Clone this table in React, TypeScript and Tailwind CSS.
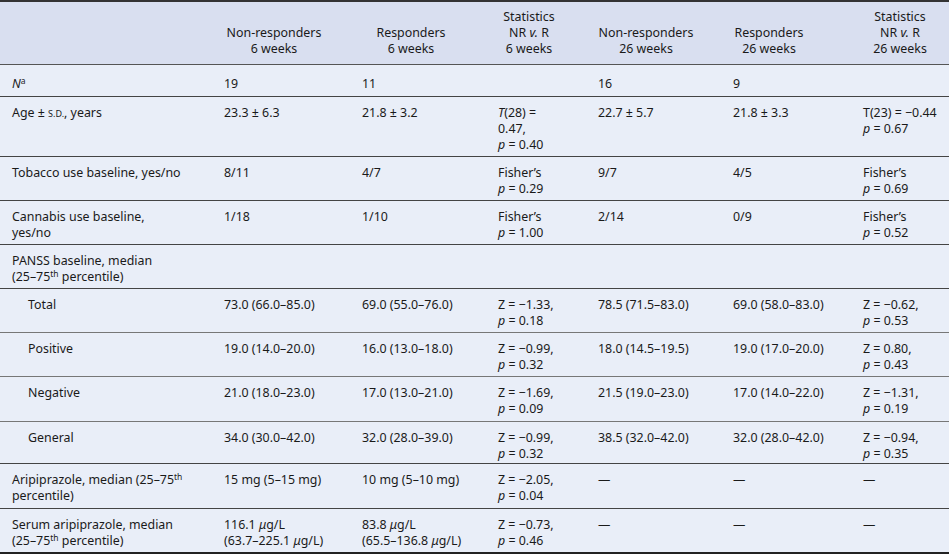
import React from 'react'

const font = { fontFamily: '"Noto Sans", "Open Sans", sans-serif' }

function P({ v }: { v: string }) {
    return (
        <>
            <i>p</i> = {v}
        </>
    )
}

function Th() {
    return <sup className="text-[8.5px] leading-none">th</sup>
}

type Row = {
    label: React.ReactNode
    indent?: boolean
    cells: React.ReactNode[]
    light?: boolean
    h: string
}

const rows: Row[] = [
    {
        label: 'Tobacco use baseline, yes/no',
        h: 'h-[43px]',
        cells: ['8/11', '4/7', <>Fisher’s<br /><P v="0.29" /></>, '9/7', '4/5', <>Fisher’s<br /><P v="0.69" /></>],
    },
    {
        label: <>Cannabis use baseline,<br />yes/no</>,
        h: 'h-[43px]',
        cells: ['1/18', '1/10', <>Fisher’s<br /><P v="1.00" /></>, '2/14', '0/9', <>Fisher’s<br /><P v="0.52" /></>],
    },
    {
        label: <>PANSS baseline, median<br />(25–75<Th /> percentile)</>,
        h: 'h-[43px]',
        cells: ['', '', '', '', '', ''],
    },
    {
        label: 'Total',
        indent: true,
        light: true,
        h: 'h-[43px]',
        cells: ['73.0 (66.0–85.0)', '69.0 (55.0–76.0)', <>Z = −1.33,<br /><P v="0.18" /></>, '78.5 (71.5–83.0)', '69.0 (58.0–83.0)', <>Z = −0.62,<br /><P v="0.53" /></>],
    },
    {
        label: 'Positive',
        indent: true,
        light: true,
        h: 'h-[43px]',
        cells: ['19.0 (14.0–20.0)', '16.0 (13.0–18.0)', <>Z = −0.99,<br /><P v="0.32" /></>, '18.0 (14.5–19.5)', '19.0 (17.0–20.0)', <>Z = 0.80,<br /><P v="0.43" /></>],
    },
    {
        label: 'Negative',
        indent: true,
        light: true,
        h: 'h-[44px]',
        cells: ['21.0 (18.0–23.0)', '17.0 (13.0–21.0)', <>Z = −1.69,<br /><P v="0.09" /></>, '21.5 (19.0–23.0)', '17.0 (14.0–22.0)', <>Z = −1.31,<br /><P v="0.19" /></>],
    },
    {
        label: 'General',
        indent: true,
        h: 'h-[41px]',
        cells: ['34.0 (30.0–42.0)', '32.0 (28.0–39.0)', <>Z = −0.99,<br /><P v="0.32" /></>, '38.5 (32.0–42.0)', '32.0 (28.0–42.0)', <>Z = −0.94,<br /><P v="0.35" /></>],
    },
    {
        label: <>Aripiprazole, median (25–75<Th /><br />percentile)</>,
        h: 'h-[44px]',
        cells: ['15 mg (5–15 mg)', '10 mg (5–10 mg)', <>Z = −2.05,<br /><P v="0.04" /></>, '—', '—', '—'],
    },
    {
        label: <>Serum aripiprazole, median<br />(25–75<Th /> percentile)</>,
        h: 'h-[43px]',
        cells: [
            <>116.1 <i>μ</i>g/L<br />(63.7–225.1 <i>μ</i>g/L)</>,
            <>83.8 <i>μ</i>g/L<br />(65.5–136.8 <i>μ</i>g/L)</>,
            <>Z = −0.73,<br /><P v="0.46" /></>,
            '—',
            '—',
            '—',
        ],
    },
]

function Head({ children, pr }: { children: React.ReactNode; pr: string }) {
    return (
        <th className="p-0 font-normal text-center align-bottom">
            <div className={`h-[62px] flex flex-col justify-end pb-[7px] ${pr}`}>
                <div>{children}</div>
            </div>
        </th>
    )
}

export default function App() {
    return (
        <div className="w-[949px] h-[554px] bg-[#e9eef8] text-[#1a1a1a] text-[12.4px] leading-[16px]" style={font}>
            <table className="w-[949px] table-fixed border-collapse">
                <colgroup>
                    <col className="w-[212px]" />
                    <col className="w-[138px]" />
                    <col className="w-[136px]" />
                    <col className="w-[100px]" />
                    <col className="w-[135px]" />
                    <col className="w-[130px]" />
                    <col className="w-[98px]" />
                </colgroup>
                <thead>
                    <tr className="bg-[#d9dff0] border-t-2 border-t-[#333] border-b border-b-[#555]">
                        <th className="p-0" />
                        <Head pr="pr-[14px]">Non-responders<br />6 weeks</Head>
                        <Head pr="pr-[14px]">Responders<br />6 weeks</Head>
                        <Head pr="pr-[14px]">Statistics<br />NR <i>v.</i> R<br />6 weeks</Head>
                        <Head pr="pr-[15px]">Non-responders<br />26 weeks</Head>
                        <Head pr="pr-[34px]">Responders<br />26 weeks</Head>
                        <Head pr="pr-0">Statistics<br />NR <i>v.</i> R<br />26 weeks</Head>
                    </tr>
                </thead>
                <tbody>
                    <tr className="border-b border-b-[#444]">
                        <td className="p-0 align-top"><div className="h-[31px] pl-3 pt-[11px]"><i>N</i><sup className="text-[8.5px] leading-none">a</sup></div></td>
                        <td className="p-0 align-top"><div className="h-[31px] pl-3 pt-[11px]">19</div></td>
                        <td className="p-0 align-top"><div className="h-[31px] pl-3 pt-[11px]">11</div></td>
                        <td className="p-0" />
                        <td className="p-0 align-top"><div className="h-[31px] pl-3 pt-[11px]">16</div></td>
                        <td className="p-0 align-top"><div className="h-[31px] pl-3 pt-[11px]">9</div></td>
                        <td className="p-0" />
                    </tr>
                    <tr className="border-b border-b-[#444]">
                        <td className="p-0 align-top"><div className="h-[59px] pl-3 pt-[8px]">Age ± <span className="text-[9px] leading-none">S.D.</span>, years</div></td>
                        <td className="p-0 align-top"><div className="h-[59px] pl-3 pt-[8px]">23.3 ± 6.3</div></td>
                        <td className="p-0 align-top"><div className="h-[59px] pl-3 pt-[8px]">21.8 ± 3.2</div></td>
                        <td className="p-0 align-top"><div className="h-[59px] pl-3 pt-[8px]"><i>T</i>(28) =<br />0.47,<br /><P v="0.40" /></div></td>
                        <td className="p-0 align-top"><div className="h-[59px] pl-3 pt-[8px]">22.7 ± 5.7</div></td>
                        <td className="p-0 align-top"><div className="h-[59px] pl-3 pt-[8px]">21.8 ± 3.3</div></td>
                        <td className="p-0 align-top"><div className="h-[59px] pl-3 pt-[8px] whitespace-nowrap">T(23) = −0.44<br /><P v="0.67" /></div></td>
                    </tr>
                    {rows.map((r, i) => (
                        <tr key={i} className={i === rows.length - 1 ? 'border-b-2 border-b-[#222]' : r.light ? 'border-b border-b-[#777]' : 'border-b border-b-[#444]'}>
                            <td className="p-0 align-top">
                                <div className={`${r.h} pt-[8px] ${r.indent ? 'pl-7' : 'pl-3'}`}>{r.label}</div>
                            </td>
                            {r.cells.map((c, j) => (
                                <td key={j} className="p-0 align-top">
                                    <div className={`${r.h} pl-3 pt-[8px]`}>{c}</div>
                                </td>
                            ))}
                        </tr>
                    ))}
                </tbody>
            </table>
        </div>
    )
}
